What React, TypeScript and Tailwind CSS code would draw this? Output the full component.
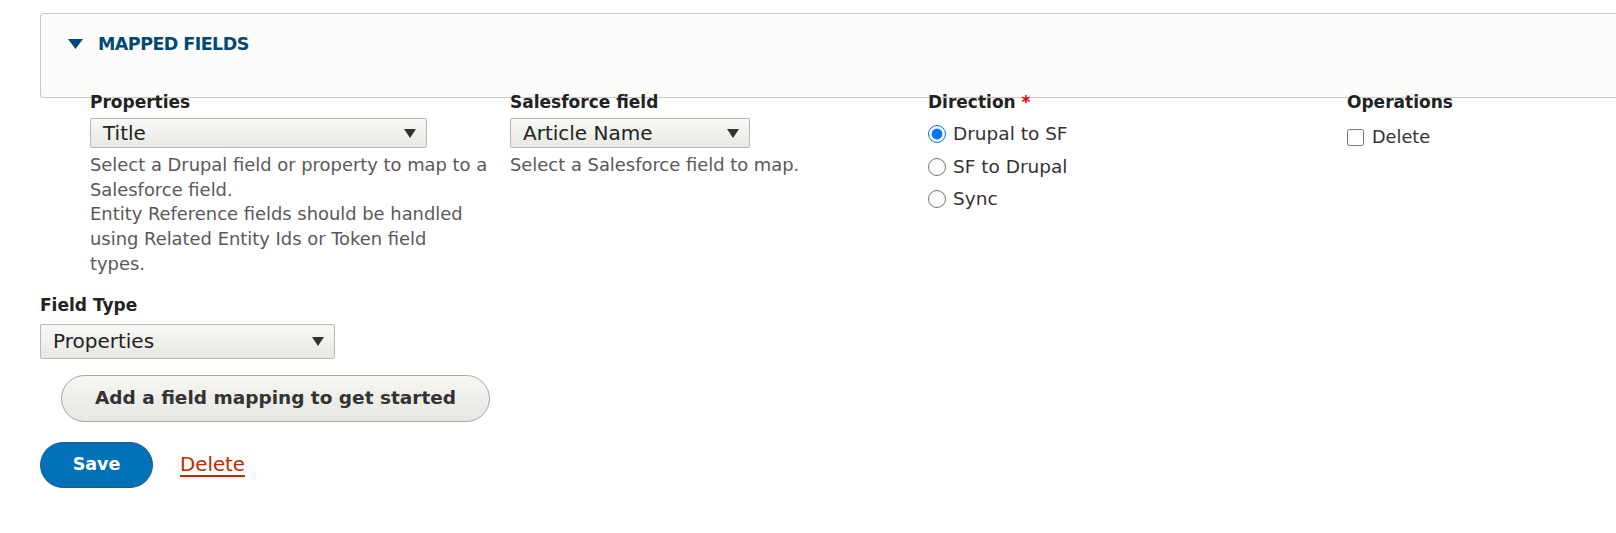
import React from "react";

const font = { fontFamily: '"DejaVu Sans", "Liberation Sans", sans-serif' };

function Arrow() {
  return (
    <svg width="12" height="9" viewBox="0 0 12 9" className="shrink-0">
      <polygon points="0,0 12,0 6,9" fill="#333" />
    </svg>
  );
}

function FakeSelect({ value, className }: { value: string; className: string }) {
  return (
    <div
      className={
        "flex items-center justify-between border border-[#b8b8b8] rounded-[2px] bg-gradient-to-b from-[#f8f8f6] to-[#e8e8e4] pl-[12px] pr-[10px] text-[20px] text-[#222] " +
        className
      }
    >
      <span>{value}</span>
      <Arrow />
    </div>
  );
}

export default function App() {
  return (
    <div className="min-h-[533px] w-full overflow-hidden bg-white pl-[40px] pt-[13px]" style={font}>
      <div className="-mr-[40px] h-[85px] rounded-tl-[3px] rounded-bl-[3px] border border-[#c8c8c8] bg-[#fcfcfa] pl-[27px] pt-[20px]">
        <div className="flex h-[20px] items-center gap-[15px]">
          <svg width="15" height="10" viewBox="0 0 15 10">
            <polygon points="0,0 15,0 7.5,10" fill="#004875" />
          </svg>
          <span className="text-[17.5px] font-bold leading-[20px] tracking-[-0.55px] text-[#004875]">MAPPED FIELDS</span>
        </div>
      </div>

      <div className="relative -mt-[6px] flex pl-[50px]">
        <div className="w-[420px]">
          <div className="text-[17px] font-bold leading-[20px] text-[#222]">Properties</div>
          <FakeSelect value="Title" className="mt-[6px] h-[30px] w-[337px]" />
          <div className="mt-[5px] w-[405px] text-[17.9px] leading-[24.7px] text-[#595959]">
            Select a Drupal field or property to map to a Salesforce field.
            <br />
            Entity Reference fields should be handled using Related Entity Ids or Token field
            <br />
            types.
          </div>
        </div>
        <div className="w-[418px]">
          <div className="text-[17px] font-bold leading-[20px] text-[#222]">Salesforce field</div>
          <FakeSelect value="Article Name" className="mt-[6px] h-[30px] w-[240px]" />
          <div className="mt-[5px] text-[17.9px] leading-[24.7px] text-[#595959]">Select a Salesforce field to map.</div>
        </div>
        <div className="w-[419px]">
          <div className="text-[17px] font-bold leading-[20px] text-[#222]">
            Direction <span className="text-[#e00]">*</span>
          </div>
          <div className="mt-[6px] flex flex-col">
            {[
              ["Drupal to SF", true],
              ["SF to Drupal", false],
              ["Sync", false],
            ].map(([label, checked]) => (
              <label key={label as string} className="flex h-[32.5px] items-center gap-[7px] text-[18.5px] text-[#333]">
                <input type="radio" name="dir" defaultChecked={checked as boolean} className="m-0 h-[18px] w-[18px]" />
                <span>{label as string}</span>
              </label>
            ))}
          </div>
        </div>
        <div>
          <div className="text-[17px] font-bold leading-[20px] text-[#222]">Operations</div>
          <label className="mt-[9px] flex h-[32px] items-center gap-[8px] text-[17.7px] text-[#333]">
            <input type="checkbox" className="m-0 h-[17px] w-[17px]" />
            <span>Delete</span>
          </label>
        </div>
      </div>

      <div className="mt-[18px] text-[17px] font-bold leading-[20px] text-[#222]">Field Type</div>
      <FakeSelect value="Properties" className="mt-[9px] h-[35px] w-[295px]" />

      <button className="ml-[21px] mt-[16px] flex h-[47px] w-[429px] items-center justify-center rounded-full border border-[#a6a6a6] bg-gradient-to-b from-[#f6f6f3] to-[#e6e6e2] text-[18.5px] font-bold text-[#333]">
        Add a field mapping to get started
      </button>

      <div className="mt-[20px] flex items-center">
        <button className="flex h-[46px] w-[113px] items-center justify-center rounded-full border border-[#1e5c90] bg-[#0071b8] text-[17.5px] font-bold text-white">
          Save
        </button>
        <a href="#" className="ml-[27px] text-[19.8px] text-[#bc2c00] underline decoration-[#bc2c00] decoration-2 underline-offset-[4px]">
          Delete
        </a>
      </div>
    </div>
  );
}
